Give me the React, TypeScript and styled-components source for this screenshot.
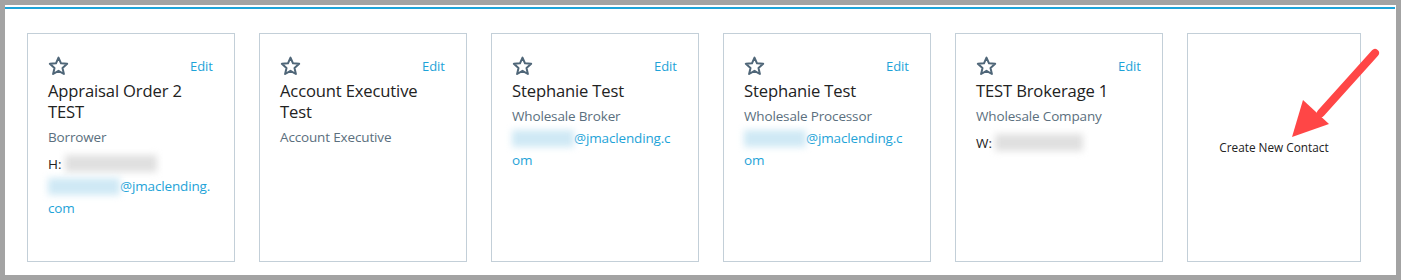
import React from "react";
import styled, { createGlobalStyle } from "styled-components";

const Global = createGlobalStyle`
  html, body { margin: 0; padding: 0; background: #a3a3a3; }
  body { font-family: "Open Sans", "Noto Sans", sans-serif; }
`;

const Frame = styled.div`
  margin: 5px;
  height: 270px;
  background: #fff;
  box-sizing: border-box;
  padding-top: 2px;
  position: relative;
`;

const TopRule = styled.div`
  height: 2px;
  background: #1ea3d8;
  margin-right: 1px;
`;

const CardRow = styled.div`
  display: flex;
  gap: 24px;
  padding: 24px 0 0 22px;
`;

const Card = styled.div<{ $narrow?: boolean }>`
  box-sizing: border-box;
  width: ${(p) => (p.$narrow ? "174px" : "208px")};
  height: 229px;
  border: 1px solid #c3cfd8;
  padding: 21px 21px 0 20px;
  display: flex;
  flex-direction: column;
  ${(p) =>
    p.$narrow &&
    `align-items: center; justify-content: center; padding: 0;`}
`;

const Head = styled.div`
  display: flex;
  justify-content: space-between;
  align-items: flex-end;
  height: 21px;
`;

const StarIcon = () => (
  <svg width="21" height="20" viewBox="0 0 24 23" aria-hidden>
    <polygon
      points="12,1.8 14.9,8.4 22,9 16.6,13.7 18.2,20.7 12,17 5.8,20.7 7.4,13.7 2,9 9.1,8.4"
      fill="none"
      stroke="#4f6678"
      strokeWidth="2.3"
      strokeLinejoin="round"
    />
  </svg>
);

const EditLink = styled.span`
  font-size: 13px;
  color: #1ea3d8;
  line-height: 16px;
  margin-bottom: 2px;
`;

const Title = styled.div`
  margin-top: 4px;
  font-size: 16.6px;
  line-height: 21px;
  color: #222;
  letter-spacing: -0.15px;
`;

const Role = styled.div`
  margin-top: 6px;
  font-size: 13.5px;
  line-height: 18px;
  color: #5b6f7e;
  letter-spacing: -0.15px;
`;

const Phone = styled.div`
  margin-top: 9px;
  font-size: 13.5px;
  line-height: 18px;
  color: #222;
  display: flex;
  align-items: center;
  gap: 3px;
`;

const Email = styled.div`
  margin-top: 2px;
  font-size: 13.5px;
  line-height: 22px;
  color: #1ea3d8;
  word-break: break-all;
  letter-spacing: -0.15px;
`;

const Blur = styled.span<{ $w: number; $tone: "grey" | "blue" }>`
  display: inline-block;
  vertical-align: middle;
  width: ${(p) => p.$w}px;
  height: 17px;
  background: ${(p) => (p.$tone === "grey" ? "#e0e0e0" : "#cfe9f5")};
  filter: blur(3.5px);
  margin-top: -4px;
  margin-bottom: -2px;
`;

const CreateText = styled.span`
  font-size: 11.8px;
  color: #222;
  margin-top: -2px;
`;

const Arrow = styled.svg`
  position: absolute;
  left: 1280px;
  top: 40px;
  overflow: visible;
`;

type Contact = {
  name: string;
  role: string;
  phone?: { label: string; w: number };
  email?: { w: number; domain: string };
};

const contacts: Contact[] = [
  {
    name: "Appraisal Order 2 TEST",
    role: "Borrower",
    phone: { label: "H:", w: 92 },
    email: { w: 72, domain: "@jmaclending.com" },
  },
  { name: "Account Executive Test", role: "Account Executive" },
  {
    name: "Stephanie Test",
    role: "Wholesale Broker",
    email: { w: 62, domain: "@jmaclending.com" },
  },
  {
    name: "Stephanie Test",
    role: "Wholesale Processor",
    email: { w: 62, domain: "@jmaclending.com" },
  },
  {
    name: "TEST Brokerage 1",
    role: "Wholesale Company",
    phone: { label: "W:", w: 88 },
  },
];

export default function App() {
  return (
    <>
      <Global />
      <Frame>
        <TopRule />
        <CardRow>
          {contacts.map((c, i) => (
            <Card key={i}>
              <Head>
                <StarIcon />
                <EditLink>Edit</EditLink>
              </Head>
              <Title>{c.name}</Title>
              <Role>{c.role}</Role>
              {c.phone && (
                <Phone>
                  {c.phone.label}
                  <Blur $w={c.phone.w} $tone="grey" />
                </Phone>
              )}
              {c.email && (
                <Email>
                  <Blur $w={c.email.w} $tone="blue" />
                  {c.email.domain}
                </Email>
              )}
            </Card>
          ))}
          <Card $narrow>
            <CreateText>Create New Contact</CreateText>
          </Card>
        </CardRow>
        <Arrow width="100" height="100" viewBox="0 0 100 100">
          <line x1="90" y1="8" x2="36" y2="68" stroke="#ff4646" strokeWidth="8" strokeLinecap="round" />
          <polygon points="18,55 44,79 7,92" fill="#ff4646" />
        </Arrow>
      </Frame>
    </>
  );
}
